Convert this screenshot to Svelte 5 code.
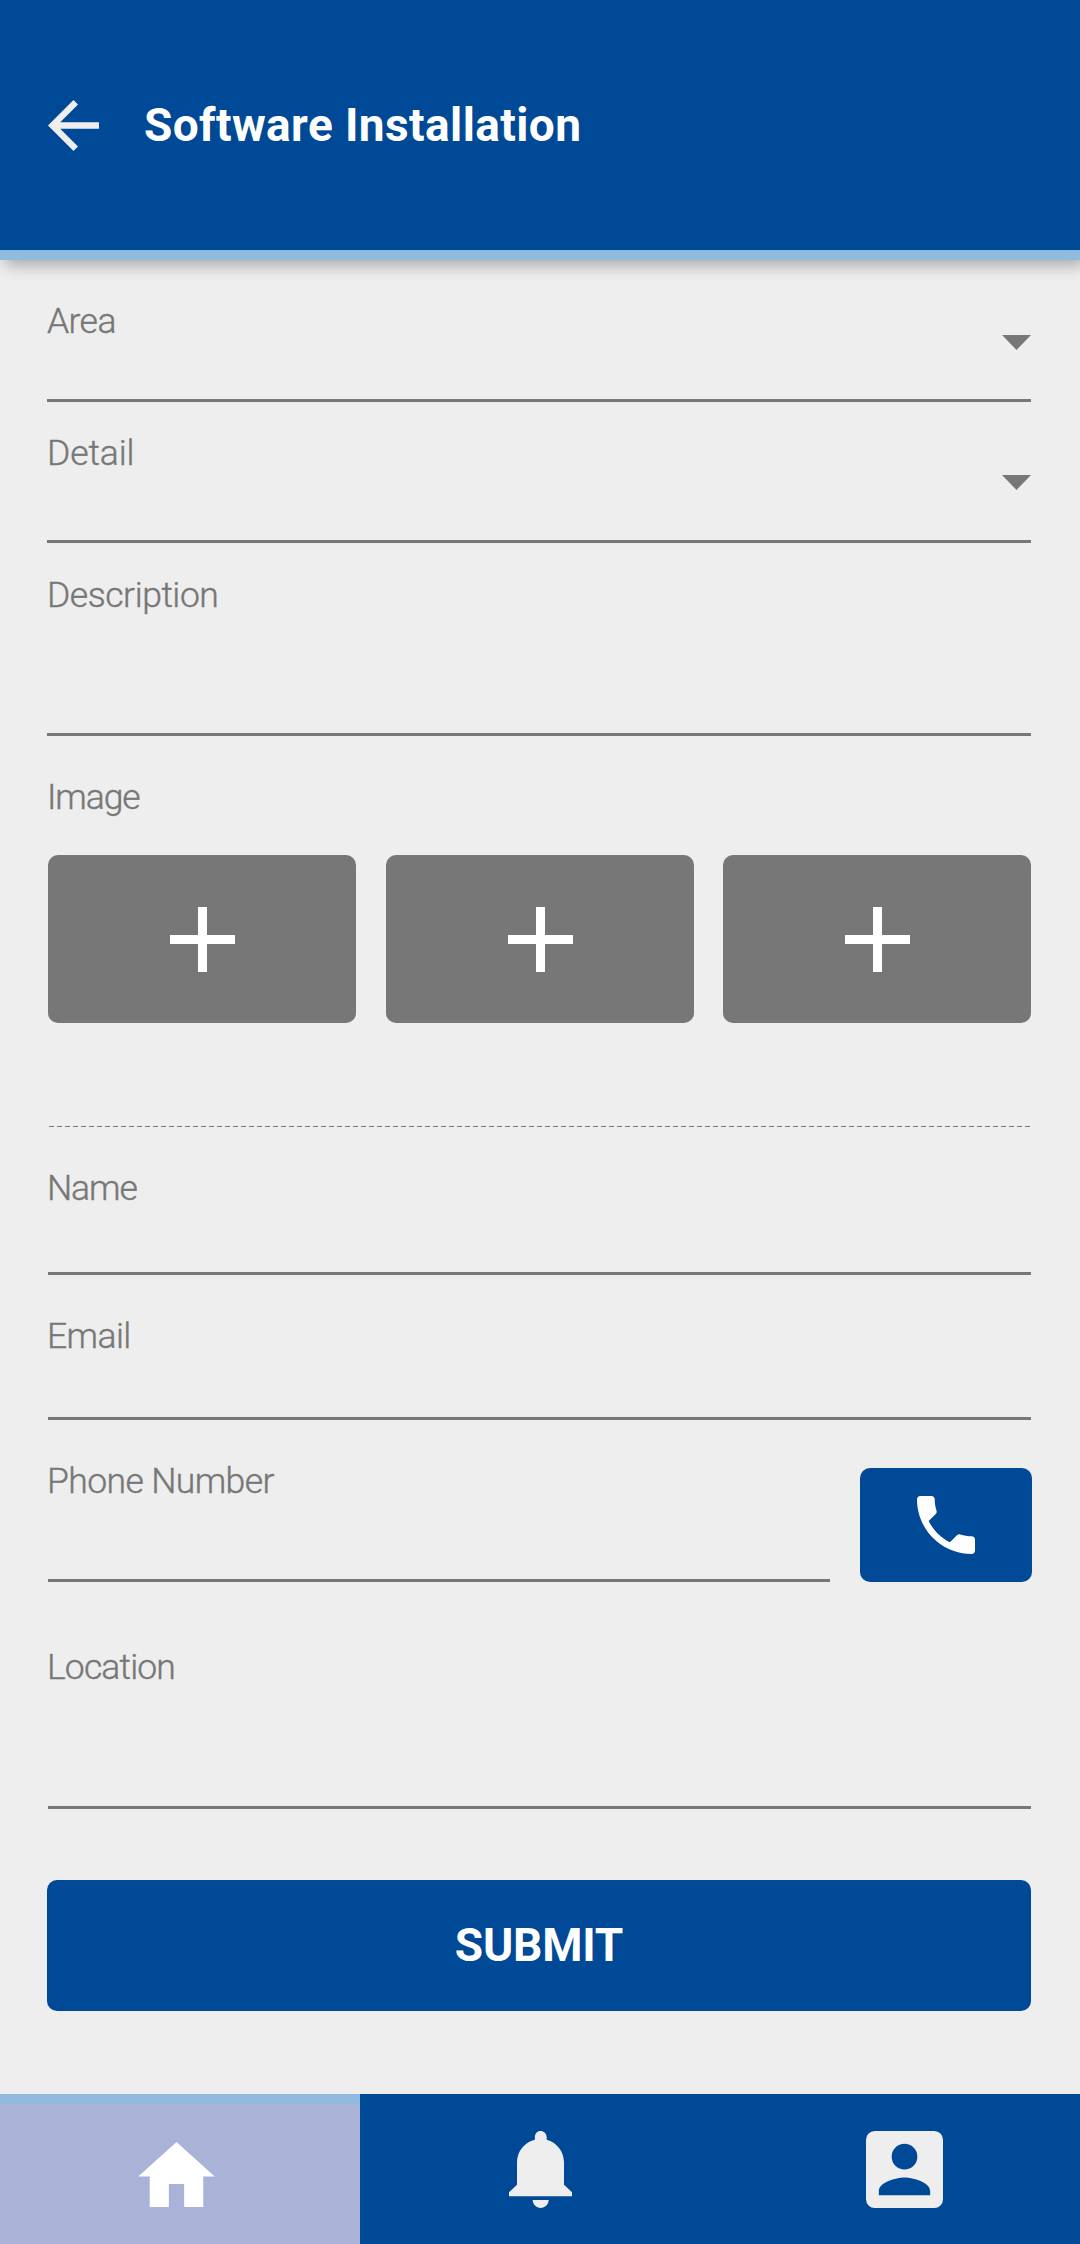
<script>
  const slots = [1, 2, 3];
</script>

<div class="screen">
  <header class="topbar">
    <svg class="back" viewBox="4 4 16 16"><path d="M20 11H7.83l5.59-5.59L12 4l-8 8 8 8 1.41-1.41L7.83 13H20z" /></svg>
    <h1>Software Installation</h1>
  </header>

  <main>
    <div class="field area">
      <span class="label">Area</span>
      <svg class="caret" viewBox="0 0 29 15"><path d="M0 0h29L14.5 15z" /></svg>
    </div>
    <div class="field detail">
      <span class="label">Detail</span>
      <svg class="caret" viewBox="0 0 29 15"><path d="M0 0h29L14.5 15z" /></svg>
    </div>
    <div class="field description"><span class="label">Description</span></div>

    <section class="images">
      <span class="label">Image</span>
      <div class="slots">
        {#each slots as slot (slot)}
          <button class="slot" aria-label="Add image {slot}">
            <svg viewBox="0 0 65 65"><path d="M28 0h9v28h28v9H37v28h-9V37H0v-9h28z" /></svg>
          </button>
        {/each}
      </div>
    </section>

    <div class="divider"></div>

    <div class="field inset name"><span class="label">Name</span></div>
    <div class="field inset email"><span class="label">Email</span></div>
    <div class="phone-row">
      <div class="field phone"><span class="label">Phone Number</span></div>
      <button class="call" aria-label="Call">
        <svg viewBox="3 3 18 18"><path d="M6.62 10.79c1.44 2.83 3.76 5.14 6.59 6.59l2.2-2.2c.27-.27.67-.36 1.02-.24 1.12.37 2.33.57 3.57.57.55 0 1 .45 1 1V20c0 .55-.45 1-1 1-9.39 0-17-7.61-17-17 0-.55.45-1 1-1h3.5c.55 0 1 .45 1 1 0 1.25.2 2.45.57 3.57.11.35.03.74-.25 1.02z" /></svg>
      </button>
    </div>
    <div class="field inset location"><span class="label">Location</span></div>

    <button class="submit">SUBMIT</button>
  </main>

  <nav>
    <a class="tab active" href="#home" aria-label="Home">
      <svg class="home" viewBox="2 3 20 17"><path d="M10 20v-6h4v6h5v-8h3L12 3 2 12h3v8z" /></svg>
    </a>
    <a class="tab" href="#alerts" aria-label="Notifications">
      <svg class="bell" viewBox="0 0 189 231"><path d="M94.5 0c10 0 18.500 8 18.500 18v8c30 8 52 35 52 68v67l24 23v12H0v-12l24-23V94c0-33 22-60 53.500-68v-8c0-10 7-18 17-18zM71 207h48c0 13-11 24-24 24s-24-11-24-24z" /></svg>
    </a>
    <a class="tab" href="#account" aria-label="Account">
      <svg class="account" viewBox="0 0 231 231"><path fill-rule="evenodd" d="M26 0h179a26 26 0 0 1 26 26v179a26 26 0 0 1-26 26H26a26 26 0 0 1-26-26V26A26 26 0 0 1 26 0zM115.5 38.5a38.5 38.5 0 1 0 0 77a38.5 38.5 0 1 0 0-77zM38.5 192.5h154V180c0-26-51-40.5-77-40.5s-77 14.5-77 40.5z" /></svg>
    </a>
  </nav>
</div>

<style>
  :global(body) {
    margin: 0;
    background: #eee;
  }
  .screen {
    width: 1080px;
    height: 2244px;
    display: flex;
    flex-direction: column;
    overflow: hidden;
    background: #eee;
    color: #777;
    font-family: Roboto, "Liberation Sans", sans-serif;
  }
  svg {
    display: block;
    flex: none;
    fill: currentColor;
  }
  button {
    padding: 0;
    border: 0;
    font: inherit;
    color: #fff;
  }
  .topbar {
    box-sizing: border-box;
    flex: none;
    height: 260px;
    padding: 0 47px 0 48px;
    display: flex;
    align-items: center;
    background: #004996;
    border-bottom: 10px solid #90bbdf;
    box-shadow: 5px 5px 15px rgba(0, 0, 0, 0.3);
    color: #eee;
  }
  .back {
    width: 51px;
    height: 51px;
  }
  h1 {
    margin: 0 0 1px 45px;
    color: #fff;
    font-size: 46px;
    line-height: 52px;
    font-weight: 700;
    letter-spacing: 0.4px;
    white-space: nowrap;
  }
  main {
    flex: 1;
    padding: 0 49px 0 47px;
    display: flex;
    flex-direction: column;
  }
  .label {
    display: block;
    font-size: 35.5px;
    font-weight: 300;
    line-height: 40px;
    letter-spacing: -0.6px;
    white-space: nowrap;
    -webkit-text-stroke: 0.4px currentColor;
  }
  .field {
    box-sizing: border-box;
    display: flex;
    align-items: flex-start;
    justify-content: space-between;
    border-bottom: 3px solid #777;
  }
  .inset {
    margin-left: 1px;
  }
  .inset .label,
  .phone .label,
  .images .label {
    margin-left: -1px;
  }
  .area {
    height: 142px;
    padding-top: 41px;
  }
  .detail {
    height: 141px;
    padding-top: 31px;
  }
  .detail .label {
    letter-spacing: -0.1px;
  }
  .description {
    height: 193px;
    padding-top: 32px;
  }
  .description .label {
    letter-spacing: -0.45px;
  }
  .caret {
    width: 29px;
    height: 15px;
    margin-top: 34px;
  }
  .detail .caret {
    margin-top: 42px;
  }
  .images {
    padding: 41px 0 0 1px;
  }
  .images .label,
  .name .label {
    letter-spacing: -1.1px;
  }
  .slots {
    margin-top: 38px;
    display: flex;
    justify-content: space-between;
  }
  .slot {
    width: 308px;
    height: 168px;
    display: flex;
    align-items: center;
    justify-content: center;
    border-radius: 10px;
    background: #777;
  }
  .slot:nth-child(2) {
    padding-left: 1px;
  }
  .slot svg {
    width: 65px;
    height: 65px;
  }
  .divider {
    height: 1px;
    margin: 103px -1px 0 2px;
    background: repeating-linear-gradient(90deg, #777 0 5px, transparent 5px 8px);
  }
  .name {
    height: 148px;
    padding-top: 41px;
  }
  .email {
    height: 145px;
    padding-top: 41px;
  }
  .phone-row {
    margin: 0 -1px 0 1px;
    display: flex;
    align-items: flex-end;
    gap: 30px;
  }
  .phone {
    flex: 1;
    height: 162px;
    padding-top: 41px;
  }
  .call {
    width: 172px;
    height: 114px;
    display: flex;
    align-items: center;
    justify-content: center;
    border-radius: 10px;
    background: #004996;
  }
  .call svg {
    width: 58px;
    height: 58px;
  }
  .location {
    height: 227px;
    padding-top: 65px;
  }
  .location .label {
    letter-spacing: -0.85px;
  }
  .submit {
    height: 131px;
    margin-top: 71px;
    padding-bottom: 2px;
    border-radius: 10px;
    background: #004996;
    font-size: 46px;
    font-weight: 700;
    letter-spacing: -0.2px;
  }
  nav {
    flex: none;
    height: 150px;
    display: grid;
    grid-template-columns: repeat(3, 1fr);
    background: #004996;
  }
  .tab {
    box-sizing: border-box;
    display: flex;
    justify-content: center;
    padding-top: 37px;
    color: #eee;
  }
  .active {
    padding: 38px 7px 0 0;
    border-top: 10px solid #90bbdf;
    background: #a9b3d8;
    color: #fff;
  }
  .home {
    width: 77px;
    height: 65px;
  }
  .bell {
    width: 63px;
    height: 77px;
  }
  .account {
    width: 77px;
    height: 77px;
    margin-left: 9px;
  }
</style>
